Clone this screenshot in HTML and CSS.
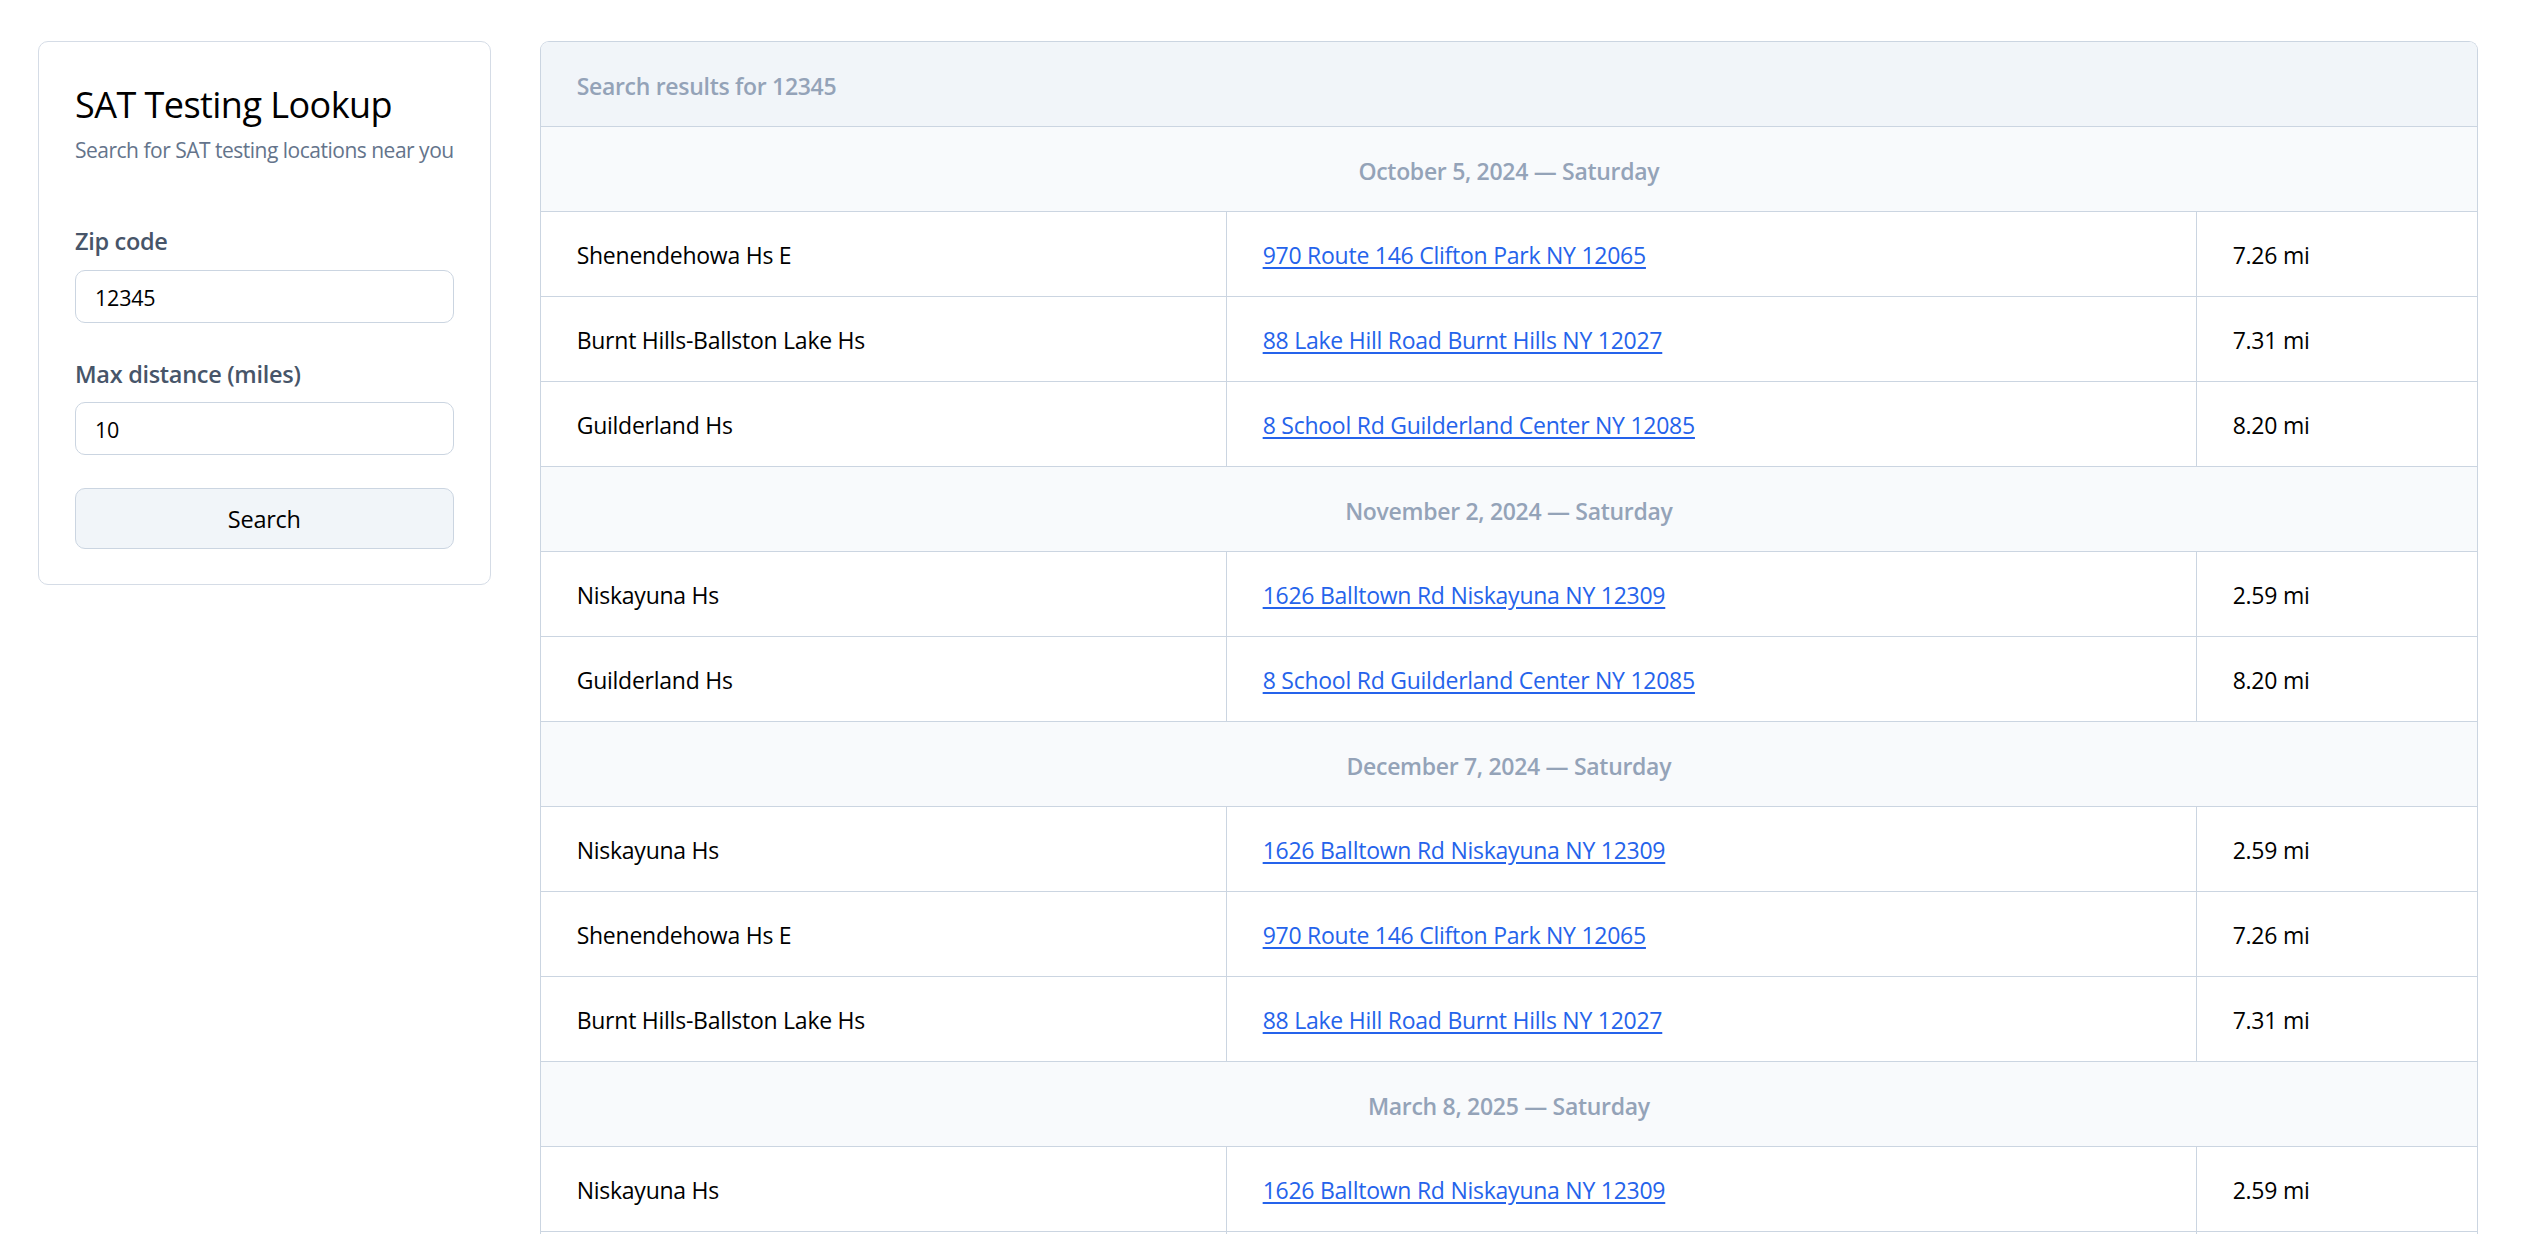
FILE: index.html
```html
<!DOCTYPE html>
<html lang="en">
<head>
<meta charset="utf-8">
<title>SAT Testing Lookup</title>
<link rel="stylesheet" href="styles.css">
</head>
<body>
<div class="page">
  <aside class="card">
    <h1 class="title">SAT Testing Lookup</h1>
    <p class="subtitle">Search for SAT testing locations near you</p>
    <form class="form">
      <div class="field">
        <label class="label" for="zip">Zip code</label>
        <input class="input" id="zip" type="text" value="12345">
      </div>
      <div class="field">
        <label class="label" for="dist">Max distance (miles)</label>
        <input class="input" id="dist" type="text" value="10">
      </div>
      <button class="button" type="button">Search</button>
    </form>
  </aside>
  <main class="results">
    <table class="table">
      <colgroup>
        <col class="col-name">
        <col class="col-addr">
        <col class="col-dist">
      </colgroup>
      <thead>
        <tr><th class="head" colspan="3">Search results for 12345</th></tr>
      </thead>
      <tbody>
        <tr class="date-row"><td colspan="3">October 5, 2024 — Saturday</td></tr>
        <tr><td>Shenendehowa Hs E</td><td><a href="#">970 Route 146 Clifton Park NY 12065</a></td><td>7.26 mi</td></tr>
        <tr><td>Burnt Hills-Ballston Lake Hs</td><td><a href="#">88 Lake Hill Road Burnt Hills NY 12027</a></td><td>7.31 mi</td></tr>
        <tr><td>Guilderland Hs</td><td><a href="#">8 School Rd Guilderland Center NY 12085</a></td><td>8.20 mi</td></tr>
        <tr class="date-row"><td colspan="3">November 2, 2024 — Saturday</td></tr>
        <tr><td>Niskayuna Hs</td><td><a href="#">1626 Balltown Rd Niskayuna NY 12309</a></td><td>2.59 mi</td></tr>
        <tr><td>Guilderland Hs</td><td><a href="#">8 School Rd Guilderland Center NY 12085</a></td><td>8.20 mi</td></tr>
        <tr class="date-row"><td colspan="3">December 7, 2024 — Saturday</td></tr>
        <tr><td>Niskayuna Hs</td><td><a href="#">1626 Balltown Rd Niskayuna NY 12309</a></td><td>2.59 mi</td></tr>
        <tr><td>Shenendehowa Hs E</td><td><a href="#">970 Route 146 Clifton Park NY 12065</a></td><td>7.26 mi</td></tr>
        <tr><td>Burnt Hills-Ballston Lake Hs</td><td><a href="#">88 Lake Hill Road Burnt Hills NY 12027</a></td><td>7.31 mi</td></tr>
        <tr class="date-row"><td colspan="3">March 8, 2025 — Saturday</td></tr>
        <tr><td>Niskayuna Hs</td><td><a href="#">1626 Balltown Rd Niskayuna NY 12309</a></td><td>2.59 mi</td></tr>
        <tr><td>Guilderland Hs</td><td><a href="#">8 School Rd Guilderland Center NY 12085</a></td><td>8.20 mi</td></tr>
      </tbody>
    </table>
  </main>
</div>
</body>
</html>
```
FILE: styles.css
```css
html {
  scrollbar-width: none;
}
html::-webkit-scrollbar {
  display: none;
}
body {
  margin: 0;
  background: #ffffff;
  color: #000000;
  font-family: "Open Sans", "Noto Sans", sans-serif;
}
.page {
  display: flex;
  align-items: flex-start;
  gap: 49px;
  padding: 41px 46px 0 38px;
}
.card {
  flex: 0 0 451px;
  box-sizing: border-box;
  border: 1px solid #d5dce6;
  border-radius: 10px;
  padding: 38px 36px 35px;
}
.title {
  margin: 0;
  font-size: 36px;
  line-height: 50px;
  font-weight: 500;
  letter-spacing: -0.55px;
  color: #000000;
}
.subtitle {
  margin: 4px 0 0;
  font-size: 21px;
  line-height: 32px;
  letter-spacing: -0.5px;
  white-space: nowrap;
  color: #64748b;
}
.form {
  margin-top: 57px;
  display: flex;
  flex-direction: column;
}
.field {
  display: flex;
  flex-direction: column;
  gap: 10.5px;
  margin-bottom: 33px;
}
.label {
  font-size: 23.5px;
  line-height: 36px;
  font-weight: 600;
  letter-spacing: -0.3px;
  color: #475569;
}
.input {
  box-sizing: border-box;
  width: 100%;
  height: 53px;
  margin: 0;
  padding: 2px 19px 0;
  border: 1px solid #cbd5e1;
  border-radius: 10px;
  font-family: inherit;
  font-size: 21.5px;
  letter-spacing: -0.2px;
  color: #000000;
  background: #ffffff;
}
.button {
  box-sizing: border-box;
  width: 100%;
  height: 61px;
  margin: 0;
  border: 1px solid #cbd5e1;
  border-radius: 10px;
  background: #f1f5f9;
  font-family: inherit;
  font-size: 23.5px;
  letter-spacing: -0.25px;
  color: #000000;
}
.results {
  flex: 1 1 auto;
  min-width: 0;
  box-sizing: border-box;
  border: 1px solid #cbd5e1;
  border-bottom: none;
  border-radius: 9px 9px 0 0;
  overflow: hidden;
}
.table {
  width: 100%;
  border-collapse: separate;
  border-spacing: 0;
  table-layout: fixed;
  font-size: 23px;
  letter-spacing: -0.25px;
}
.col-name {
  width: 685px;
}
.col-addr {
  width: 970px;
}
.table th,
.table td {
  padding: 25px 36px 23px;
  line-height: 36px;
  text-align: left;
  border-bottom: 1px solid #cbd5e1;
  white-space: nowrap;
}
.table td + td {
  border-left: 1px solid #cbd5e1;
}
.table .head {
  padding: 26px 36px 22px;
  background: #f1f5f9;
  color: #94a3b8;
  font-weight: 600;
  font-size: 23px;
  letter-spacing: -0.3px;
}
.table .date-row td {
  padding: 26px 36px 22px;
  background: #f8fafc;
  color: #94a3b8;
  font-weight: 600;
  text-align: center;
  letter-spacing: -0.3px;
}
.table a {
  color: #2563eb;
  text-decoration: underline;
  text-underline-offset: 3px;
}
```
